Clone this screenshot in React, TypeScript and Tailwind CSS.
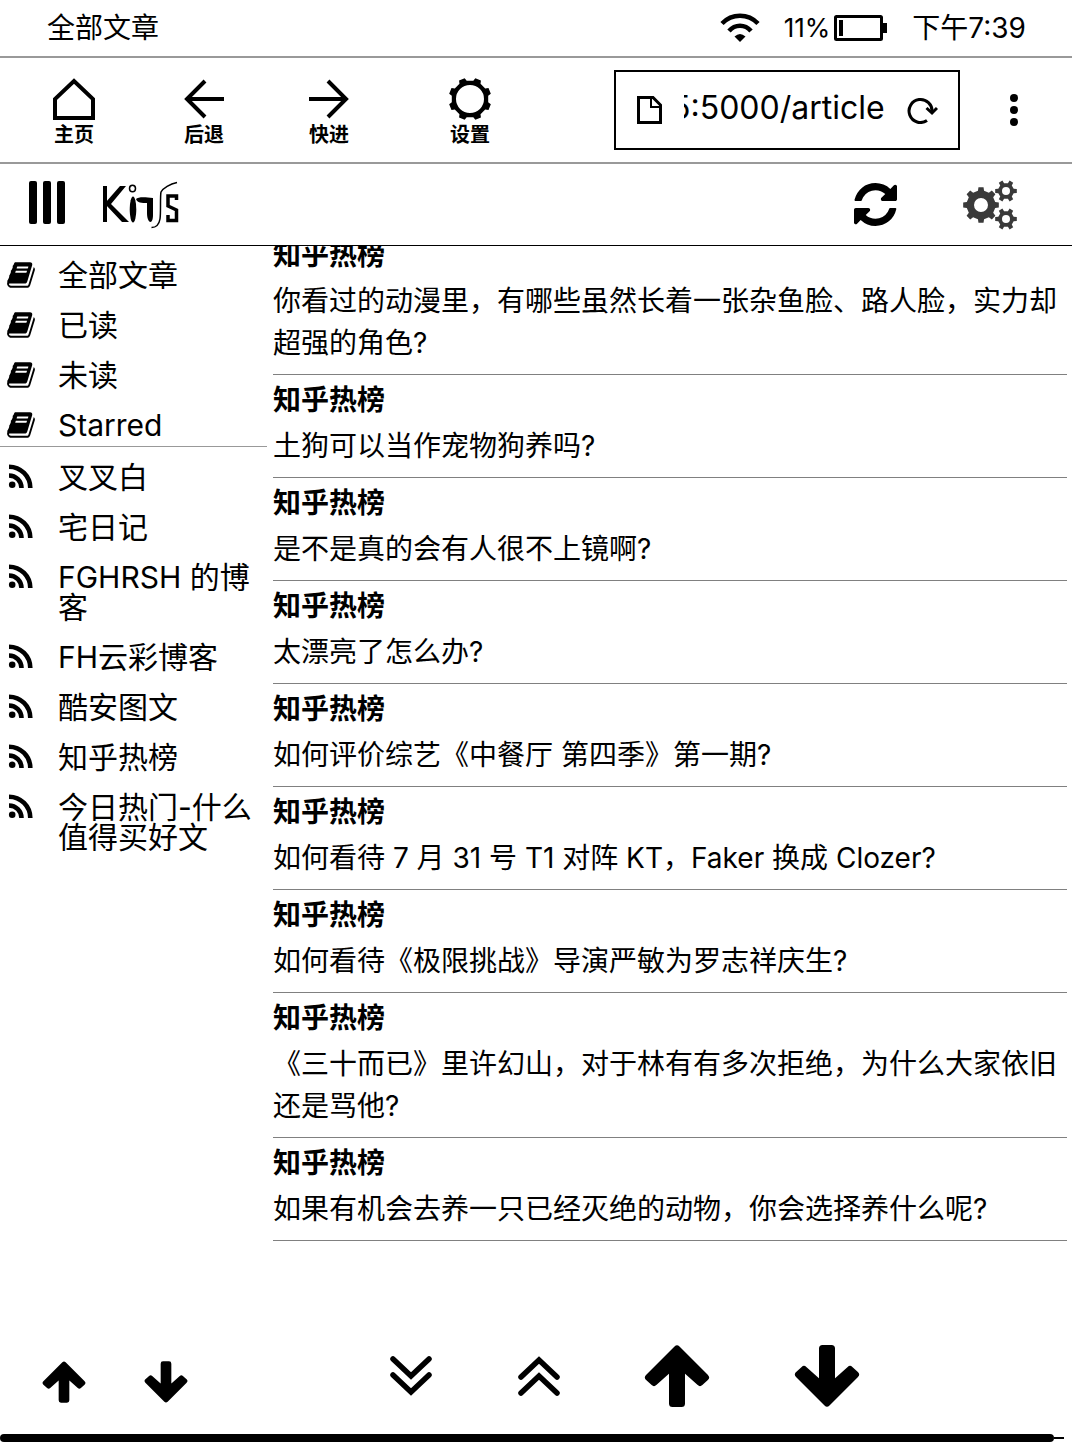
import { useLayoutEffect, useRef, type ReactNode } from "react";

const sources = ["全部文章", "已读", "未读", "Starred"];
const feeds = ["叉叉白", "宅日记", "FGHRSH 的博客", "FH云彩博客", "酷安图文", "知乎热榜", "今日热门-什么值得买好文"];
const articles = [
  "你看过的动漫里，有哪些虽然长着一张杂鱼脸、路人脸，实力却超强的角色?",
  "土狗可以当作宠物狗养吗?",
  "是不是真的会有人很不上镜啊?",
  "太漂亮了怎么办?",
  "如何评价综艺《中餐厅 第四季》第一期?",
  "如何看待 7 月 31 号 T1 对阵 KT，Faker 换成 Clozer?",
  "如何看待《极限挑战》导演严敏为罗志祥庆生?",
  "《三十而已》里许幻山，对于林有有多次拒绝，为什么大家依旧还是骂他?",
  "如果有机会去养一只已经灭绝的动物，你会选择养什么呢?",
];

function gearPath(cx: number, cy: number, outer: number, root: number, hole: number, teeth: number, offset: number) {
  const step = (Math.PI * 2) / teeth;
  const at = (r: number, a: number) => `${(cx + r * Math.cos(a)).toFixed(2)} ${(cy + r * Math.sin(a)).toFixed(2)}`;
  const points: string[] = [];
  for (let i = 0; i < teeth; i++) {
    const a = i * step + offset;
    points.push(at(root, a - step * 0.27), at(outer, a - step * 0.18), at(outer, a + step * 0.18), at(root, a + step * 0.27));
  }
  return `M${points.join("L")}ZM${cx - hole} ${cy}a${hole} ${hole} 0 1 0 ${hole * 2} 0a${hole} ${hole} 0 1 0 ${-hole * 2} 0Z`;
}

function HomeIcon() {
  return (
    <svg className="h-[42px] w-[42px]" viewBox="0 0 42 42" fill="none" stroke="currentColor" strokeWidth="4">
      <path d="M2 40V21L21 3l19 18v19z" />
    </svg>
  );
}

function ArrowIcon({ forward = false }: { forward?: boolean }) {
  return (
    <svg className="h-[42px] w-[42px]" viewBox="0 0 42 42" fill="none" stroke="currentColor" strokeWidth="4">
      {forward ? <path d="M1 21h37M20 3l18 18-18 18" /> : <path d="M41 21H4M22 3 4 21l18 18" />}
    </svg>
  );
}

function SettingsIcon() {
  return (
    <svg className="h-[42px] w-[42px]" viewBox="0 0 42 42" fill="currentColor" fillRule="evenodd">
      <path d={gearPath(21, 21, 21.5, 18.5, 14, 8, Math.PI / 8)} />
    </svg>
  );
}

function CogsIcon() {
  return (
    <svg className="h-[50px] w-[54px] text-[#3a3a3a]" viewBox="0 0 54 50" fill="currentColor" fillRule="evenodd">
      <path d={gearPath(18, 25, 18, 14.5, 7, 8, 0)} />
      <path d={gearPath(43, 11, 11, 8, 4, 6, 0)} />
      <path d={gearPath(43, 39, 11, 8, 4, 6, 0)} />
    </svg>
  );
}

function SyncIcon() {
  return (
    <svg className="h-[43px] w-[43px]" viewBox="128 128 1536 1536" fill="currentColor">
      <path d="M1639 1056q0 5-1 7-64 268-268 434.5t-478 166.5q-146 0-282.5-55t-243.5-157l-129 129q-19 19-45 19t-45-19-19-45v-448q0-26 19-45t45-19h448q26 0 45 19t19 45-19 45l-137 137q71 66 161 102t187 36q134 0 250-65t186-179q11-17 53-117 8-23 30-23h192q13 0 22.5 9.5t9.5 22.5zm25-800v448q0 26-19 45t-45 19h-448q-26 0-45-19t-19-45 19-45l138-138q-148-137-349-137-134 0-250 65t-186 179q-11 17-53 117-8 23-30 23h-199q-13 0-22.5-9.5t-9.5-22.5v-7q65-268 270-434.5t480-166.5q146 0 284 55.5t245 156.5l130-129q19-19 45-19t45 19 19 45z" />
    </svg>
  );
}

function BookIcon() {
  return (
    <svg className="h-[30px] w-[30px]" viewBox="0 0 1792 1792" fill="currentColor">
      <path d="M1703 478q40 57 18 129l-275 906q-19 64-76.5 107.5t-122.5 43.5h-923q-77 0-148.5-53.5t-99.5-131.5q-24-67-2-127 0-4 3-27t4-37q1-8-3-21.5t-3-19.5q2-11 8-21t16.5-23.5 16.5-23.5q23-38 45-91.5t30-91.5q3-10 .5-30t-.5-28q3-11 17-28t17-23q21-36 42-92t25-90q1-9-2.5-32t.5-28q4-13 22-30.5t22-22.5q19-26 42.5-84.5t27.5-96.5q1-8-3-25.5t-2-26.5q2-8 9-18t18-23 17-21q8-12 16.5-30.5t15-35 16-36 19.5-32 26.5-23.5 36-11.5 47.5 5.5l-1 3q38-9 51-9h761q74 0 114 56t18 130l-274 906q-36 119-71.5 153.5t-128.5 34.5h-869q-27 0-38 15-11 16-1 43 24 70 144 70h923q29 0 56-15.5t35-41.5l300-987q7-22 5-57 38 15 59 43zm-1064 2q-4 13 2 22.5t20 9.5h608q13 0 25.5-9.5t16.5-22.5l21-64q4-13-2-22.5t-20-9.5h-608q-13 0-25.5 9.5t-16.5 22.5zm-83 256q-4 13 2 22.5t20 9.5h608q13 0 25.5-9.5t16.5-22.5l21-64q4-13-2-22.5t-20-9.5h-608q-13 0-25.5 9.5t-16.5 22.5z" />
    </svg>
  );
}

function RssIcon() {
  return (
    <svg className="h-[30px] w-[30px]" viewBox="0 0 30 30" fill="none" stroke="currentColor" strokeWidth="4.6">
      <circle cx="6.2" cy="22.8" r="3.3" fill="currentColor" stroke="none" />
      <path d="M3 13.5A12.5 12.5 0 0 1 15.500 26M3 4.700a21.300 21.300 0 0 1 21.300 21.300" />
    </svg>
  );
}

function Logo() {
  return (
    <svg className="h-[50px] w-[80px]" viewBox="0 0 80 50" role="img" aria-label="KinJs" fill="none" stroke="currentColor">
      <path d="M4 6v36" strokeWidth="4" />
      <path d="M19 6h6L10 24l18 18h-7L5 25v-3z" fill="currentColor" stroke="none" />
      <ellipse cx="31.500" cy="8.500" rx="3" ry="3.300" strokeWidth="1.500" />
      <ellipse cx="32" cy="29.500" rx="3.300" ry="13" fill="currentColor" stroke="none" />
      <path d="M35 19c2-2 8-2 17-1v17c0 4-1 7-2.500 7S46 39 46 33V23c-5 0-10 0-11-4z" fill="currentColor" stroke="none" />
      <path d="M76 2.500C69 4 62 8 60 12c-1 4 0 20-1 27-1 6-4 8.500-8.500 8.500" strokeWidth="1.500" />
      <path d="M75.500 20v-4H67v10l8.500 4v10.500H67V35" strokeWidth="3.500" />
    </svg>
  );
}

function ThickArrow({ down = false, large = false }: { down?: boolean; large?: boolean }) {
  return (
    <svg className={large ? "h-[62px] w-[66px]" : "h-[42px] w-[44px]"} viewBox="0 0 132 124" fill="currentColor" stroke="currentColor" strokeWidth="14" strokeLinejoin="round">
      <path
        d={
          down
            ? "M66 116 9 59 20 49 57 82V7H75V82L112 49 123 59Z"
            : "M66 8 9 65 20 75 57 42V117H75V42L112 75 123 65Z"
        }
      />
    </svg>
  );
}

function DoubleChevron({ up = false }: { up?: boolean }) {
  return (
    <svg className="h-[42px] w-[42px]" viewBox="0 0 42 42" fill="none" stroke="currentColor" strokeWidth="5.500" strokeLinecap="round">
      {up ? <path d="M3 22 21 5l18 17M3 38l18-17 18 17" /> : <path d="M3 4l18 17L39 4M3 20l18 17 18-17" />}
    </svg>
  );
}

function NavButton({ label, children }: { label: string; children: ReactNode }) {
  return (
    <button type="button" className="flex flex-col items-center gap-[3px] text-xl leading-6 font-bold">
      {children}
      {label}
    </button>
  );
}

function SideItem({ label, icon }: { label: string; icon: ReactNode }) {
  return (
    <li>
      <a href="#" className="flex items-start gap-[22px] pr-1 pl-[6px] text-3xl leading-[30px]">
        <span className="shrink-0">{icon}</span>
        <span className="min-w-0 flex-1">{label}</span>
      </a>
    </li>
  );
}

export default function App() {
  const url = useRef<HTMLInputElement>(null);
  useLayoutEffect(() => {
    if (url.current) url.current.scrollLeft = url.current.scrollWidth;
  }, []);

  return (
    <div className="flex min-h-screen flex-col bg-white font-[Inter,'Noto_Sans_CJK_SC',sans-serif] text-black">
      <div className="flex h-[58px] items-center justify-between border-b-2 border-[#999] pr-[46px] pl-[47px] text-[28px] leading-[54px]">
        <span>全部文章</span>
        <div className="flex items-center">
          <svg className="h-[30px] w-10" viewBox="0 0 40 30" fill="none" stroke="currentColor" strokeWidth="4.500">
            <path d="M2 10.500c10-10.300 26-10.300 36 0M9 18c6-7 16-7 22 0" />
            <path d="M20 29l-5.500-5.500q5.500-5 11 0z" fill="currentColor" stroke="none" />
          </svg>
          <span className="ml-6 text-[26px]">11%</span>
          <svg className="ml-1 h-[26px] w-[53px]" viewBox="0 0 53 26">
            <rect x="1.500" y="1.500" width="46" height="23" rx="1" fill="none" stroke="currentColor" strokeWidth="3" />
            <path d="M5 5h4v16H5zM48 8h5v10h-5z" />
          </svg>
          <span className="ml-[25px]">下午7:39</span>
        </div>
      </div>

      <nav className="flex h-[106px] items-center border-b-2 border-[#999] pr-[52px] pl-[53px]">
        <div className="flex flex-1 items-center pt-1">
          <NavButton label="主页"><HomeIcon /></NavButton>
          <div className="ml-[88px] flex gap-[83px]">
            <NavButton label="后退"><ArrowIcon /></NavButton>
            <NavButton label="快进"><ArrowIcon forward /></NavButton>
          </div>
          <div className="ml-[99px]">
            <NavButton label="设置"><SettingsIcon /></NavButton>
          </div>
        </div>
        <div className="flex h-20 w-[346px] items-center border-2 border-black pr-5 pl-[21px]">
          <svg className="h-7 w-[25px] shrink-0" viewBox="0 0 25 28" fill="none" stroke="currentColor" strokeWidth="3">
            <path d="M1.500 1.500H16L23.500 9v17.500h-22z" />
            <path d="M14 1.500V11h9.500" strokeWidth="2" />
          </svg>
          <input
            ref={url}
            type="text"
            aria-label="网址"
            defaultValue="5:5000/article"
            className="ml-[22px] w-[201px] min-w-0 bg-transparent pb-1 text-[32px] leading-10 outline-none"
          />
          <button type="button" aria-label="重新加载" className="ml-auto">
            <svg className="h-7 w-[31px]" viewBox="0 0 31 28" fill="none" stroke="currentColor" strokeWidth="3">
              <path d="M20 24.500A11.500 11.500 0 1 1 25 16" />
              <path d="M19.500 12l5.500 5L30 12" />
            </svg>
          </button>
        </div>
        <button type="button" aria-label="菜单" className="ml-12">
          <svg className="h-9 w-3" viewBox="0 0 12 36" fill="currentColor">
            <circle cx="6" cy="6" r="4" />
            <circle cx="6" cy="18" r="4" />
            <circle cx="6" cy="30" r="4" />
          </svg>
        </button>
      </nav>

      <header className="flex h-[82px] items-center border-b border-black pr-[55px] pl-[29px]">
        <button type="button" aria-label="切换侧栏" className="flex gap-[6px] pb-1">
          <span className="h-[43px] w-2 rounded-xs bg-black" />
          <span className="h-[43px] w-2 rounded-xs bg-black" />
          <span className="h-[43px] w-2 rounded-xs bg-black" />
        </button>
        <a href="#" className="ml-9"><Logo /></a>
        <button type="button" aria-label="刷新" className="ml-auto"><SyncIcon /></button>
        <button type="button" aria-label="偏好设置" className="ml-[66px]"><CogsIcon /></button>
      </header>

      <div className="flex flex-1">
        <aside className="w-[267px] shrink-0 pt-[14px]">
          <ul className="flex flex-col gap-5 border-b border-[#999] pb-[6px]">
            {sources.map((s) => <SideItem key={s} label={s} icon={<BookIcon />} />)}
          </ul>
          <ul className="flex flex-col gap-5 pt-[15px]">
            {feeds.map((f) => <SideItem key={f} label={f} icon={<RssIcon />} />)}
          </ul>
        </aside>
        <main className="ml-[6px] min-w-0 flex-1 overflow-hidden pr-[5px]">
          <div className="-mt-4">
            {articles.map((a) => (
              <article key={a} className="border-b border-[#808080] pt-1 pb-[10px] text-[28px] leading-[42px]">
                <h2 className="mb-1 font-bold">知乎热榜</h2>
                <p>{a}</p>
              </article>
            ))}
          </div>
        </main>
      </div>

      <footer>
        <div className="flex items-center pb-[27px] pl-[42px]">
          <div className="flex gap-[58px] pt-3">
            <button type="button" aria-label="侧栏上移"><ThickArrow /></button>
            <button type="button" aria-label="侧栏下移"><ThickArrow down /></button>
          </div>
          <div className="ml-[202px] flex gap-[86px]">
            <button type="button" aria-label="到底部"><DoubleChevron /></button>
            <button type="button" aria-label="到顶部"><DoubleChevron up /></button>
          </div>
          <div className="ml-[84px] flex gap-[84px]">
            <button type="button" aria-label="上一页"><ThickArrow large /></button>
            <button type="button" aria-label="下一页"><ThickArrow down large /></button>
          </div>
        </div>
        <div className="mb-[6px] flex items-center pr-2">
          <div className="h-2 flex-1 rounded-full bg-black" />
          <div className="h-[2px] w-[10px] bg-black" />
        </div>
      </footer>
    </div>
  );
}
